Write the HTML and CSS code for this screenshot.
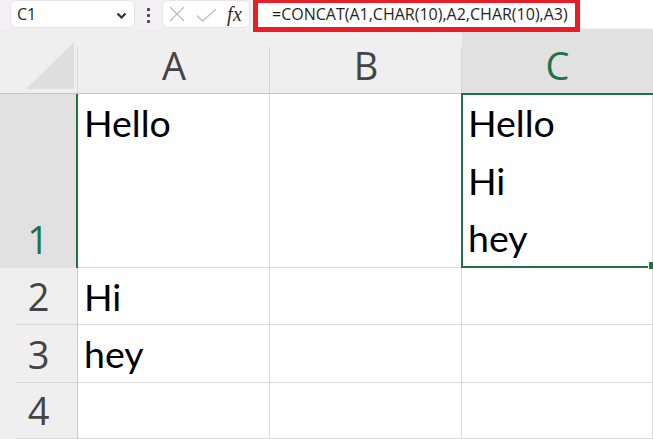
FILE: index.html
```html
<!DOCTYPE html>
<html lang="en">
<head>
    <meta charset="UTF-8">
    <title>CONCAT with line breaks</title>
    <link rel="stylesheet" href="styles.css">
</head>
<body>
    <div class="toolbar">
        <div class="namebox">
            <span>C1</span>
            <svg class="chevron" width="11" height="7" viewBox="0 0 11 7"><path d="M1.5 1.5 L5.5 5.5 L9.5 1.5" fill="none" stroke="#2b2b2b" stroke-width="2"/></svg>
        </div>
        <div class="dots"><span></span><span></span><span></span></div>
        <div class="fxbox">
            <svg width="18" height="16" viewBox="0 0 18 16"><path d="M2 1 L16 15 M16 1 L2 15" stroke="#bdbdbd" stroke-width="1.3" fill="none"/></svg>
            <svg class="check" width="21" height="14" viewBox="0 0 21 14"><path d="M1 7.5 L6.5 13 L20 1" stroke="#bdbdbd" stroke-width="1.3" fill="none"/></svg>
            <span class="fx">fx</span>
        </div>
        <div class="formula">=CONCAT(A1,CHAR(10),A2,CHAR(10),A3)</div>
        <!-- red annotation box drawn over the formula bar -->
        <div class="highlight"></div>
    </div>

    <div class="sheet">
        <div class="corner"><div class="tri"></div></div>
        <div class="colhead">A</div>
        <div class="colhead">B</div>
        <div class="colhead active">C</div>

        <div class="rowhead active">1</div>
        <div class="cell">Hello</div>
        <div class="cell"></div>
        <div class="cell selected">Hello<br>Hi<br>hey<div class="handle"></div></div>

        <div class="rowhead">2</div>
        <div class="cell">Hi</div>
        <div class="cell"></div>
        <div class="cell"></div>

        <div class="rowhead">3</div>
        <div class="cell">hey</div>
        <div class="cell"></div>
        <div class="cell"></div>

        <div class="rowhead">4</div>
        <div class="cell"></div>
        <div class="cell"></div>
        <div class="cell"></div>
    </div>
</body>
</html>
```

FILE: styles.css
```css
body {
    margin: 0;
    width: 653px;
    height: 439px;
    overflow: hidden;
    background: #ffffff;
    font-family: 'Open Sans', sans-serif;
}

.toolbar {
    position: relative;
    display: flex;
    align-items: flex-start;
    height: 29px;
    background: #f3f0f3;
}

.namebox {
    display: flex;
    align-items: center;
    justify-content: space-between;
    box-sizing: border-box;
    width: 125px;
    height: 28px;
    margin-left: 10px;
    padding: 0 7px 0 6px;
    background: white;
    border: 1px solid #e7e3e6;
    border-radius: 6px;
    font-size: 16px;
    color: #262626;
}

.chevron {
    margin-top: 2px;
}

.dots {
    display: flex;
    flex-direction: column;
    align-items: center;
    gap: 3px;
    width: 6px;
    margin: 8px 11px 0 10px;
}

.dots span {
    width: 3px;
    height: 3px;
    background: #444;
    border-radius: 1px;
}

.fxbox {
    display: flex;
    align-items: center;
    box-sizing: border-box;
    width: 88px;
    height: 28px;
    padding-left: 5px;
    background: white;
    border: 1px solid #e7e3e6;
    border-radius: 6px;
}

.fxbox .check {
    margin-left: 10px;
    margin-top: 2px;
}

.fx {
    margin-left: 10px;
    font-family: 'Liberation Serif', serif;
    font-style: italic;
    font-size: 20px;
    color: #2b2b2b;
    letter-spacing: 0.5px;
}

.formula {
    flex: 1;
    height: 28px;
    margin-left: 5px;
    padding-left: 17px;
    background: white;
    font-size: 16px;
    line-height: 28px;
    color: #1f1f1f;
}

.highlight {
    position: absolute;
    left: 253px;
    top: -2px;
    width: 327px;
    height: 34px;
    box-sizing: border-box;
    border: 5px solid #e81e26;
}

.sheet {
    display: grid;
    grid-template-columns: 78px 192px 192px 1fr;
    grid-template-rows: 65px 174px 57px 58px 1fr;
    height: 410px;
}

.sheet > div {
    box-sizing: border-box;
}

.corner {
    display: flex;
    justify-content: flex-end;
    align-items: flex-end;
    padding: 0 4px 4px 0;
    background: linear-gradient(#d4d4d4, #d4d4d4) right bottom / 1px 46px no-repeat, #efefef;
    border-bottom: 1px solid #c4c4c4;
}

.tri {
    width: 48px;
    height: 47px;
    background: #dedede;
    clip-path: polygon(100% 0, 100% 100%, 0 100%);
}

.colhead {
    display: flex;
    justify-content: center;
    align-items: flex-end;
    padding-bottom: 9px;
    background: linear-gradient(#d4d4d4, #d4d4d4) right bottom / 1px 46px no-repeat, #efefef;
    border-bottom: 1px solid #c4c4c4;
    font-size: 38px;
    line-height: 38px;
    color: #444444;
}

.colhead.active {
    background: #e1e1e1;
    color: #217346;
}

.rowhead {
    display: flex;
    justify-content: center;
    align-items: flex-end;
    padding-bottom: 10px;
    background: linear-gradient(#d9d9d9, #d9d9d9) right bottom / calc(100% - 16px) 1px no-repeat, #efefef;
    border-right: 1px solid #c8c8c8;
    font-size: 38px;
    line-height: 38px;
    color: #444444;
}

.rowhead.active {
    background: #e1e1e1;
    border-right: 2px solid #217346;
    color: #217346;
}

.cell {
    padding-left: 6px;
    border-right: 1px solid #dadada;
    border-bottom: 1px solid #dadada;
    font-family: 'Lato', sans-serif;
    font-size: 37.5px;
    line-height: 57.5px;
    color: #000000;
    white-space: nowrap;
}

.cell.selected {
    position: relative;
}

.cell.selected::after {
    content: '';
    position: absolute;
    left: -1px;
    top: -1px;
    right: -3px;
    bottom: -1px;
    border: 2px solid #217346;
}

.handle {
    position: absolute;
    right: -5px;
    bottom: -3px;
    width: 7px;
    height: 7px;
    background: #217346;
    border: 1px solid white;
    z-index: 1;
}
```
